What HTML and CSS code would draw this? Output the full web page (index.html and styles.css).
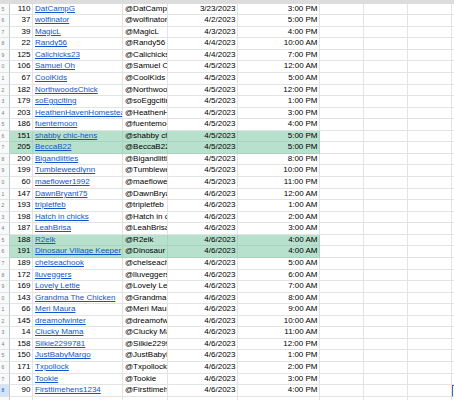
FILE: index.html
```html
<!DOCTYPE html>
<html>
<head>
<meta charset="utf-8">
<link rel="stylesheet" href="styles.css">
</head>
<body>
<div class="sheet">
  <div class="freeze"></div>
  <div class="row"><div class="c hd">5</div><div class="c d r">110</div><div class="c d"><a class="lk">DatCampG</a></div><div class="c d">@DatCampG</div><div class="c d r">3/23/2023</div><div class="c d r">3:00 PM</div><div class="c e"></div><div class="c e"></div><div class="c e"></div><div class="c e"></div></div>
  <div class="row"><div class="c hd">6</div><div class="c d r">37</div><div class="c d"><a class="lk">wolfinator</a></div><div class="c d">@wolfinator</div><div class="c d r">4/2/2023</div><div class="c d r">5:00 PM</div><div class="c e"></div><div class="c e"></div><div class="c e"></div><div class="c e"></div></div>
  <div class="row"><div class="c hd">7</div><div class="c d r">39</div><div class="c d"><a class="lk">MagicL</a></div><div class="c d">@MagicL</div><div class="c d r">4/3/2023</div><div class="c d r">4:00 PM</div><div class="c e"></div><div class="c e"></div><div class="c e"></div><div class="c e"></div></div>
  <div class="row"><div class="c hd">8</div><div class="c d r">22</div><div class="c d"><a class="lk">Randy56</a></div><div class="c d">@Randy56</div><div class="c d r">4/4/2023</div><div class="c d r">10:00 AM</div><div class="c e"></div><div class="c e"></div><div class="c e"></div><div class="c e"></div></div>
  <div class="row"><div class="c hd">9</div><div class="c d r">125</div><div class="c d"><a class="lk">Calichicks23</a></div><div class="c d">@Calichicks23</div><div class="c d r">4/4/2023</div><div class="c d r">7:00 PM</div><div class="c e"></div><div class="c e"></div><div class="c e"></div><div class="c e"></div></div>
  <div class="row"><div class="c hd">0</div><div class="c d r">106</div><div class="c d"><a class="lk">Samuel Oh</a></div><div class="c d">@Samuel Oh</div><div class="c d r">4/5/2023</div><div class="c d r">12:00 AM</div><div class="c e"></div><div class="c e"></div><div class="c e"></div><div class="c e"></div></div>
  <div class="row"><div class="c hd">1</div><div class="c d r">67</div><div class="c d"><a class="lk">CoolKids</a></div><div class="c d">@CoolKids</div><div class="c d r">4/5/2023</div><div class="c d r">5:00 AM</div><div class="c e"></div><div class="c e"></div><div class="c e"></div><div class="c e"></div></div>
  <div class="row"><div class="c hd">2</div><div class="c d r">182</div><div class="c d"><a class="lk">NorthwoodsChick</a></div><div class="c d">@NorthwoodsChick</div><div class="c d r">4/5/2023</div><div class="c d r">12:00 PM</div><div class="c e"></div><div class="c e"></div><div class="c e"></div><div class="c e"></div></div>
  <div class="row"><div class="c hd">3</div><div class="c d r">179</div><div class="c d"><a class="lk">soEggciting</a></div><div class="c d">@soEggciting</div><div class="c d r">4/5/2023</div><div class="c d r">1:00 PM</div><div class="c e"></div><div class="c e"></div><div class="c e"></div><div class="c e"></div></div>
  <div class="row"><div class="c hd">4</div><div class="c d r">203</div><div class="c d"><a class="lk">HeathenHavenHomestead</a></div><div class="c d">@HeathenHavenHomestead</div><div class="c d r">4/5/2023</div><div class="c d r">3:00 PM</div><div class="c e"></div><div class="c e"></div><div class="c e"></div><div class="c e"></div></div>
  <div class="row"><div class="c hd">5</div><div class="c d r">186</div><div class="c d"><a class="lk">fuentemoon</a></div><div class="c d">@fuentemoon</div><div class="c d r">4/5/2023</div><div class="c d r">4:00 PM</div><div class="c e"></div><div class="c e"></div><div class="c e"></div><div class="c e"></div></div>
  <div class="row hl"><div class="c hd">6</div><div class="c d r">151</div><div class="c d"><a class="lk">shabby chic-hens</a></div><div class="c d">@shabby chic-hens</div><div class="c d r">4/5/2023</div><div class="c d r">5:00 PM</div><div class="c e"></div><div class="c e"></div><div class="c e"></div><div class="c e"></div></div>
  <div class="row hl"><div class="c hd">7</div><div class="c d r">205</div><div class="c d"><a class="lk">BeccaB22</a></div><div class="c d">@BeccaB22</div><div class="c d r">4/5/2023</div><div class="c d r">5:00 PM</div><div class="c e"></div><div class="c e"></div><div class="c e"></div><div class="c e"></div></div>
  <div class="row"><div class="c hd">8</div><div class="c d r">200</div><div class="c d"><a class="lk">Bigandlittles</a></div><div class="c d">@Bigandlittles</div><div class="c d r">4/5/2023</div><div class="c d r">8:00 PM</div><div class="c e"></div><div class="c e"></div><div class="c e"></div><div class="c e"></div></div>
  <div class="row"><div class="c hd">9</div><div class="c d r">199</div><div class="c d"><a class="lk">Tumbleweedlynn</a></div><div class="c d">@Tumbleweedlynn</div><div class="c d r">4/5/2023</div><div class="c d r">10:00 PM</div><div class="c e"></div><div class="c e"></div><div class="c e"></div><div class="c e"></div></div>
  <div class="row"><div class="c hd">0</div><div class="c d r">60</div><div class="c d"><a class="lk">maeflower1992</a></div><div class="c d">@maeflower1992</div><div class="c d r">4/5/2023</div><div class="c d r">11:00 PM</div><div class="c e"></div><div class="c e"></div><div class="c e"></div><div class="c e"></div></div>
  <div class="row"><div class="c hd">1</div><div class="c d r">147</div><div class="c d"><a class="lk">DawnBryant75</a></div><div class="c d">@DawnBryant75</div><div class="c d r">4/6/2023</div><div class="c d r">12:00 AM</div><div class="c e"></div><div class="c e"></div><div class="c e"></div><div class="c e"></div></div>
  <div class="row"><div class="c hd">2</div><div class="c d r">193</div><div class="c d"><a class="lk">tripletfeb</a></div><div class="c d">@tripletfeb</div><div class="c d r">4/6/2023</div><div class="c d r">1:00 AM</div><div class="c e"></div><div class="c e"></div><div class="c e"></div><div class="c e"></div></div>
  <div class="row"><div class="c hd">3</div><div class="c d r">198</div><div class="c d"><a class="lk">Hatch in chicks</a></div><div class="c d">@Hatch in chicks</div><div class="c d r">4/6/2023</div><div class="c d r">2:00 AM</div><div class="c e"></div><div class="c e"></div><div class="c e"></div><div class="c e"></div></div>
  <div class="row"><div class="c hd">4</div><div class="c d r">187</div><div class="c d"><a class="lk">LeahBrisa</a></div><div class="c d">@LeahBrisa</div><div class="c d r">4/6/2023</div><div class="c d r">3:00 AM</div><div class="c e"></div><div class="c e"></div><div class="c e"></div><div class="c e"></div></div>
  <div class="row hl"><div class="c hd">5</div><div class="c d r">188</div><div class="c d"><a class="lk">R2elk</a></div><div class="c d">@R2elk</div><div class="c d r">4/6/2023</div><div class="c d r">4:00 AM</div><div class="c e"></div><div class="c e"></div><div class="c e"></div><div class="c e"></div></div>
  <div class="row hl"><div class="c hd">6</div><div class="c d r">191</div><div class="c d"><a class="lk">Dinosaur Village Keeper</a></div><div class="c d">@Dinosaur Village Keeper</div><div class="c d r">4/6/2023</div><div class="c d r">4:00 AM</div><div class="c e"></div><div class="c e"></div><div class="c e"></div><div class="c e"></div></div>
  <div class="row"><div class="c hd">7</div><div class="c d r">189</div><div class="c d"><a class="lk">chelseachook</a></div><div class="c d">@chelseachook</div><div class="c d r">4/6/2023</div><div class="c d r">5:00 AM</div><div class="c e"></div><div class="c e"></div><div class="c e"></div><div class="c e"></div></div>
  <div class="row"><div class="c hd">8</div><div class="c d r">172</div><div class="c d"><a class="lk">lluveggers</a></div><div class="c d">@lluveggers</div><div class="c d r">4/6/2023</div><div class="c d r">6:00 AM</div><div class="c e"></div><div class="c e"></div><div class="c e"></div><div class="c e"></div></div>
  <div class="row"><div class="c hd">9</div><div class="c d r">169</div><div class="c d"><a class="lk">Lovely Lettie</a></div><div class="c d">@Lovely Lettie</div><div class="c d r">4/6/2023</div><div class="c d r">7:00 AM</div><div class="c e"></div><div class="c e"></div><div class="c e"></div><div class="c e"></div></div>
  <div class="row"><div class="c hd">0</div><div class="c d r">143</div><div class="c d"><a class="lk">Grandma The Chicken</a></div><div class="c d">@Grandma The Chicken</div><div class="c d r">4/6/2023</div><div class="c d r">8:00 AM</div><div class="c e"></div><div class="c e"></div><div class="c e"></div><div class="c e"></div></div>
  <div class="row"><div class="c hd">1</div><div class="c d r">66</div><div class="c d"><a class="lk">Meri Maura</a></div><div class="c d">@Meri Maura</div><div class="c d r">4/6/2023</div><div class="c d r">9:00 AM</div><div class="c e"></div><div class="c e"></div><div class="c e"></div><div class="c e"></div></div>
  <div class="row"><div class="c hd">2</div><div class="c d r">145</div><div class="c d"><a class="lk">dreamofwinter</a></div><div class="c d">@dreamofwinter</div><div class="c d r">4/6/2023</div><div class="c d r">10:00 AM</div><div class="c e"></div><div class="c e"></div><div class="c e"></div><div class="c e"></div></div>
  <div class="row"><div class="c hd">3</div><div class="c d r">14</div><div class="c d"><a class="lk">Clucky Mama</a></div><div class="c d">@Clucky Mama</div><div class="c d r">4/6/2023</div><div class="c d r">11:00 AM</div><div class="c e"></div><div class="c e"></div><div class="c e"></div><div class="c e"></div></div>
  <div class="row"><div class="c hd">4</div><div class="c d r">158</div><div class="c d"><a class="lk">Silkie2299781</a></div><div class="c d">@Silkie2299781</div><div class="c d r">4/6/2023</div><div class="c d r">12:00 PM</div><div class="c e"></div><div class="c e"></div><div class="c e"></div><div class="c e"></div></div>
  <div class="row"><div class="c hd">5</div><div class="c d r">150</div><div class="c d"><a class="lk">JustBabyMargo</a></div><div class="c d">@JustBabyMargo</div><div class="c d r">4/6/2023</div><div class="c d r">1:00 PM</div><div class="c e"></div><div class="c e"></div><div class="c e"></div><div class="c e"></div></div>
  <div class="row"><div class="c hd">6</div><div class="c d r">171</div><div class="c d"><a class="lk">Txpollock</a></div><div class="c d">@Txpollock</div><div class="c d r">4/6/2023</div><div class="c d r">2:00 PM</div><div class="c e"></div><div class="c e"></div><div class="c e"></div><div class="c e"></div></div>
  <div class="row"><div class="c hd">7</div><div class="c d r">160</div><div class="c d"><a class="lk">Tookie</a></div><div class="c d">@Tookie</div><div class="c d r">4/6/2023</div><div class="c d r">3:00 PM</div><div class="c e"></div><div class="c e"></div><div class="c e"></div><div class="c e"></div></div>
  <div class="row"><div class="c hd act">8</div><div class="c d r">90</div><div class="c d"><a class="lk">Firsttimehens1234</a></div><div class="c d">@Firsttimehens1234</div><div class="c d r">4/6/2023</div><div class="c d r">4:00 PM</div><div class="c e"></div><div class="c e"></div><div class="c e"></div><div class="c e sel"></div></div>
  <div class="row"><div class="c hd">9</div><div class="c d r"></div><div class="c d"></div><div class="c d"></div><div class="c d r"></div><div class="c d r"></div><div class="c e"></div><div class="c e"></div><div class="c e"></div><div class="c e"></div></div>
</div>
</body>
</html>
```
FILE: styles.css
```css
html, body {
  margin: 0;
  padding: 0;
  background: #ffffff;
}
body {
  font-family: "Liberation Sans", Arial, sans-serif;
  font-size: 8px;
  color: #000000;
  overflow: hidden;
}
.sheet {
  width: 454px;
  height: 400px;
  overflow: hidden;
}
.freeze {
  height: 3.6px;
  background: #dcdcdc;
}
.row {
  display: grid;
  grid-template-columns: 10px 23px 90px 45px 70px 82px 44px 44px 44px 20px;
  height: 11.57px;
}
.c {
  box-sizing: border-box;
  height: 11.57px;
  border-right: 1px solid #e2e3e3;
  border-bottom: 1px solid #e2e3e3;
  overflow: hidden;
  white-space: nowrap;
  line-height: 10.8px;
  padding: 0 1.5px 0 2px;
}
.r {
  text-align: right;
}
.hd {
  background: #f8f9fa;
  border-right-color: #c4c7c5;
  border-bottom-color: #e2e3e3;
  color: #7a7a7a;
  font-size: 5px;
  padding: 0 0 0 1.5px;
  line-height: 11px;
}
.hd.act {
  background: #d3e3fd;
  color: #0b57d0;
}
.hl .d {
  background: #b7e1cd;
  border-bottom-color: #a9d3bf;
  border-right-color: #a9d3bf;
}
.lk {
  color: #1155cc;
  text-decoration: underline;
}
.sel {
  border-left: 1.5px solid #1a73e8;
  border-top: 1px solid #1a73e8;
}
```
